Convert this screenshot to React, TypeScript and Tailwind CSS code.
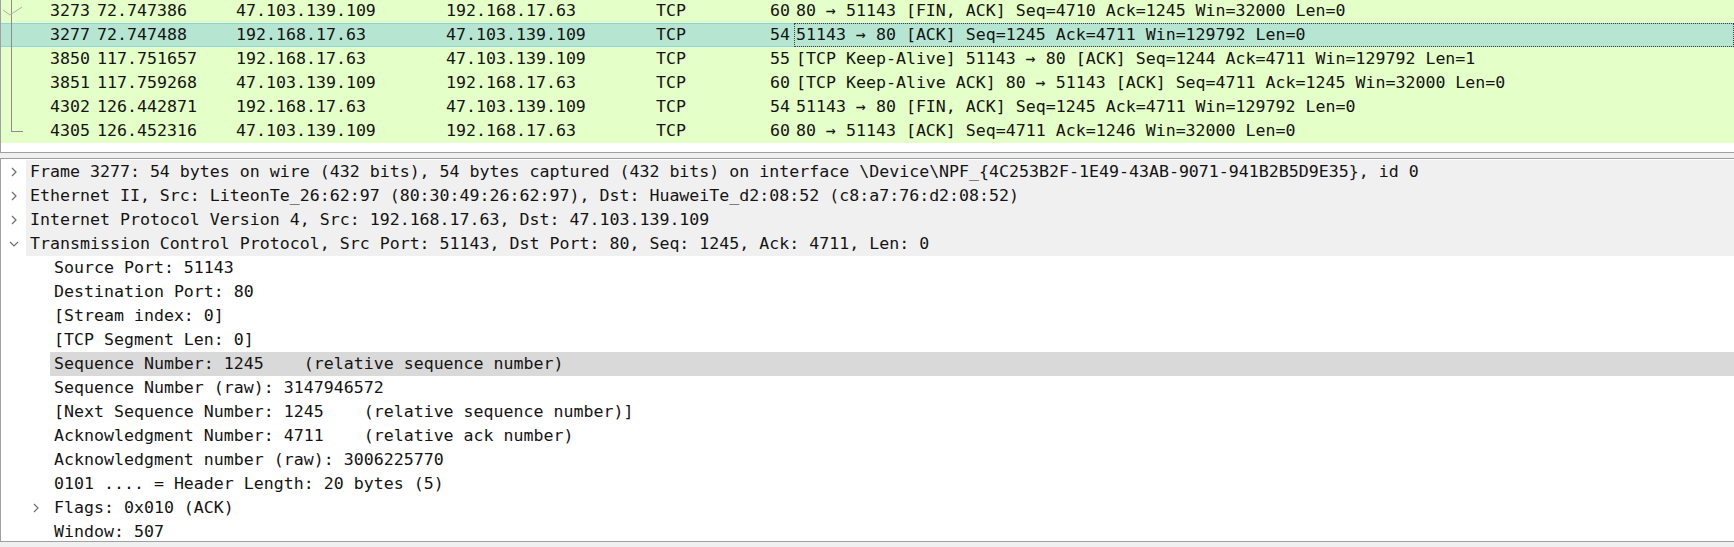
import React from "react";

type Packet = {
  no: string;
  time: string;
  src: string;
  dst: string;
  proto: string;
  len: string;
  info: string;
  tree: "check" | "line" | "end";
  selected?: boolean;
};

const packets: Packet[] = [
  { no: "3273", time: "72.747386", src: "47.103.139.109", dst: "192.168.17.63", proto: "TCP", len: "60", info: "80 → 51143 [FIN, ACK] Seq=4710 Ack=1245 Win=32000 Len=0", tree: "check" },
  { no: "3277", time: "72.747488", src: "192.168.17.63", dst: "47.103.139.109", proto: "TCP", len: "54", info: "51143 → 80 [ACK] Seq=1245 Ack=4711 Win=129792 Len=0", tree: "line", selected: true },
  { no: "3850", time: "117.751657", src: "192.168.17.63", dst: "47.103.139.109", proto: "TCP", len: "55", info: "[TCP Keep-Alive] 51143 → 80 [ACK] Seq=1244 Ack=4711 Win=129792 Len=1", tree: "line" },
  { no: "3851", time: "117.759268", src: "47.103.139.109", dst: "192.168.17.63", proto: "TCP", len: "60", info: "[TCP Keep-Alive ACK] 80 → 51143 [ACK] Seq=4711 Ack=1245 Win=32000 Len=0", tree: "line" },
  { no: "4302", time: "126.442871", src: "192.168.17.63", dst: "47.103.139.109", proto: "TCP", len: "54", info: "51143 → 80 [FIN, ACK] Seq=1245 Ack=4711 Win=129792 Len=0", tree: "line" },
  { no: "4305", time: "126.452316", src: "47.103.139.109", dst: "192.168.17.63", proto: "TCP", len: "60", info: "80 → 51143 [ACK] Seq=4711 Ack=1246 Win=32000 Len=0", tree: "end" },
];

type Field = {
  text: string;
  level: 0 | 1;
  toggle?: "open" | "closed";
  highlight?: boolean;
};

const fields: Field[] = [
  { text: "Frame 3277: 54 bytes on wire (432 bits), 54 bytes captured (432 bits) on interface \\Device\\NPF_{4C253B2F-1E49-43AB-9071-941B2B5D9E35}, id 0", level: 0, toggle: "closed" },
  { text: "Ethernet II, Src: LiteonTe_26:62:97 (80:30:49:26:62:97), Dst: HuaweiTe_d2:08:52 (c8:a7:76:d2:08:52)", level: 0, toggle: "closed" },
  { text: "Internet Protocol Version 4, Src: 192.168.17.63, Dst: 47.103.139.109", level: 0, toggle: "closed" },
  { text: "Transmission Control Protocol, Src Port: 51143, Dst Port: 80, Seq: 1245, Ack: 4711, Len: 0", level: 0, toggle: "open" },
  { text: "Source Port: 51143", level: 1 },
  { text: "Destination Port: 80", level: 1 },
  { text: "[Stream index: 0]", level: 1 },
  { text: "[TCP Segment Len: 0]", level: 1 },
  { text: "Sequence Number: 1245    (relative sequence number)", level: 1, highlight: true },
  { text: "Sequence Number (raw): 3147946572", level: 1 },
  { text: "[Next Sequence Number: 1245    (relative sequence number)]", level: 1 },
  { text: "Acknowledgment Number: 4711    (relative ack number)", level: 1 },
  { text: "Acknowledgment number (raw): 3006225770", level: 1 },
  { text: "0101 .... = Header Length: 20 bytes (5)", level: 1 },
  { text: "Flags: 0x010 (ACK)", level: 1, toggle: "closed" },
  { text: "Window: 507", level: 1 },
];

// conversation tree drawn in the first column of the packet list
const TreeMark = ({ kind }: { kind: Packet["tree"] }) => (
  <svg width="25" height="24" viewBox="0 0 25 24" shapeRendering="crispEdges">
    {kind === "end" ? (
      <path d="M10.5 0 V12.5 H22" stroke="#8c8c8c" fill="none" />
    ) : (
      <path d="M10.5 0 V24" stroke="#8c8c8c" fill="none" />
    )}
    {kind === "check" && (
      <path d="M2 11 L9 16 L21 8" stroke="#b0b0b0" fill="none" shapeRendering="geometricPrecision" />
    )}
  </svg>
);

const Chevron = ({ open }: { open: boolean }) =>
  open ? (
    <svg width="10" height="8" viewBox="0 0 10 8">
      <path d="M1 2 L5 6 L9 2" stroke="#6f6f6f" strokeWidth="1.2" fill="none" />
    </svg>
  ) : (
    <svg width="8" height="10" viewBox="0 0 8 10">
      <path d="M2 1 L6 5 L2 9" stroke="#6f6f6f" strokeWidth="1.2" fill="none" />
    </svg>
  );

const PacketRow = ({ p }: { p: Packet }) => (
  <div
    className={`flex h-[24px] items-center whitespace-pre ${
      p.selected ? "bg-[#b6e6d2] border-y border-[#8fd5de]" : ""
    }`}
  >
    <div className="w-[25px] h-[24px] shrink-0 self-center">
      <TreeMark kind={p.tree} />
    </div>
    <div className="w-[64px] shrink-0 text-right">{p.no}</div>
    <div className="w-[146px] shrink-0 pl-[7px]">{p.time}</div>
    <div className="w-[210px] shrink-0">{p.src}</div>
    <div className="w-[210px] shrink-0">{p.dst}</div>
    <div className="w-[100px] shrink-0">{p.proto}</div>
    <div className="w-[38px] shrink-0 text-right pr-[4px]">{p.len}</div>
    <div
      className={`flex-1 self-stretch flex items-center pl-px border ${
        p.selected ? "-my-px border-dotted border-[#404040]" : "border-transparent"
      }`}
    >
      {p.info}
    </div>
  </div>
);

const FieldRow = ({ f }: { f: Field }) => (
  <div className="flex h-[24px] items-stretch whitespace-pre">
    {f.level === 0 ? (
      <div className="w-[25px] shrink-0 flex items-center justify-center">
        {f.toggle && <Chevron open={f.toggle === "open"} />}
      </div>
    ) : (
      <div className="w-[49px] shrink-0 flex items-center pl-[25px]">
        <div className="w-[20px] flex items-center justify-center">
          {f.toggle && <Chevron open={f.toggle === "open"} />}
        </div>
      </div>
    )}
    <div
      className={`flex-1 flex items-center pl-[4px] ${
        f.level === 0 ? "bg-[#f0f0f0]" : f.highlight ? "bg-[#d9d9d9]" : ""
      }`}
    >
      {f.text}
    </div>
  </div>
);

export default function App() {
  return (
    <div className="w-[1734px] h-[547px] overflow-hidden bg-white text-[#141414] font-['DejaVu_Sans_Mono',monospace] text-[16.6px] leading-[24px]">
      {/* packet list */}
      <div className="h-[153px] border-l border-b border-[#a0a0a0] overflow-hidden">
        <div className="-mt-px bg-[#e4ffc7]">
          {packets.map((p) => (
            <PacketRow key={p.no} p={p} />
          ))}
        </div>
      </div>

      {/* splitter */}
      <div className="h-[6px] bg-[#f0f0f0] border-b border-[#a0a0a0]" />

      {/* packet details */}
      <div className="h-[382px] border-l border-[#a0a0a0] pt-px overflow-hidden">
        {fields.map((f, i) => (
          <FieldRow key={i} f={f} />
        ))}
      </div>

      {/* bottom scrollbar edge */}
      <div className="h-[6px] bg-[#f0f0f0] border-t border-[#a0a0a0]" />
    </div>
  );
}
